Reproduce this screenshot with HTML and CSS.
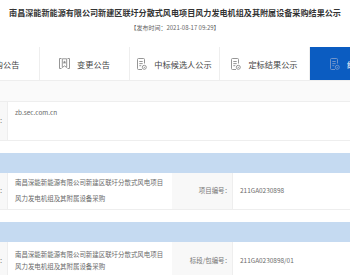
FILE: index.html
```html
<!DOCTYPE html>
<html lang="zh-CN">
<head>
<meta charset="utf-8">
<title>结果公示</title>
<link rel="stylesheet" href="styles.css">
</head>
<body>
<div class="page">
  <h1 class="title">南昌深能新能源有限公司新建区联圩分散式风电项目风力发电机组及其附属设备采购结果公示</h1>
  <div class="meta">【发布时间：2021-08-17 09:29】</div>

  <div class="tabs">
    <div class="tab">
      <svg class="icon" viewBox="0 0 10 12" width="10" height="12"><path d="M7.5 5.5V1.5a1 1 0 0 0-1-1h-5a1 1 0 0 0-1 1v9a1 1 0 0 0 1 1h3.5" fill="none" stroke="currentColor" stroke-width="0.9"/><path d="M2.3 3.5h3.4M2.3 5.6h3.4M2.3 7.7h2" stroke="currentColor" stroke-width="0.9"/><circle cx="7.3" cy="9.3" r="2" fill="none" stroke="currentColor" stroke-width="0.9"/><circle cx="7.3" cy="9.3" r="0.6" fill="currentColor"/></svg>
      <span>采购公告</span>
    </div>
    <div class="tab">
      <svg class="icon" viewBox="0 0 11 11" width="11" height="11"><path d="M2.5 0.5H0.5v10h2M8.5 0.5h2v10h-2" fill="none" stroke="currentColor" stroke-width="0.9"/><path d="M3.3 0.8v8.7l2.2-1.6 2.2 1.6V0.8z" fill="none" stroke="currentColor" stroke-width="0.9"/><path d="M5.5 2.6l0.55 1.1 1.2 0.15-0.9 0.8 0.25 1.2-1.1-0.6-1.1 0.6 0.25-1.2-0.9-0.8 1.2-0.15z" fill="currentColor"/></svg>
      <span>变更公告</span>
    </div>
    <div class="tab">
      <svg class="icon" viewBox="0 0 10 12" width="10" height="12"><path d="M7.5 5.5V1.5a1 1 0 0 0-1-1h-5a1 1 0 0 0-1 1v9a1 1 0 0 0 1 1h3.5" fill="none" stroke="currentColor" stroke-width="0.9"/><path d="M2.3 3.5h3.4M2.3 5.6h3.4M2.3 7.7h2" stroke="currentColor" stroke-width="0.9"/><circle cx="7.3" cy="9.3" r="2" fill="none" stroke="currentColor" stroke-width="0.9"/><circle cx="7.3" cy="9.3" r="0.6" fill="currentColor"/></svg>
      <span>中标候选人公示</span>
    </div>
    <div class="tab">
      <svg class="icon" viewBox="0 0 10 12" width="10" height="12"><path d="M7.5 5.5V1.5a1 1 0 0 0-1-1h-5a1 1 0 0 0-1 1v9a1 1 0 0 0 1 1h3.5" fill="none" stroke="currentColor" stroke-width="0.9"/><path d="M2.3 3.5h3.4M2.3 5.6h3.4M2.3 7.7h2" stroke="currentColor" stroke-width="0.9"/><circle cx="7.3" cy="9.3" r="2" fill="none" stroke="currentColor" stroke-width="0.9"/><circle cx="7.3" cy="9.3" r="0.6" fill="currentColor"/></svg>
      <span>定标结果公示</span>
    </div>
    <div class="tab tab-active">
      <svg class="icon" viewBox="0 0 10 12" width="10" height="12"><path d="M7.5 5.5V1.5a1 1 0 0 0-1-1h-5a1 1 0 0 0-1 1v9a1 1 0 0 0 1 1h3.5" fill="none" stroke="currentColor" stroke-width="0.9"/><path d="M2.3 3.5h3.4M2.3 5.6h3.4M2.3 7.7h2" stroke="currentColor" stroke-width="0.9"/><circle cx="7.3" cy="9.3" r="2" fill="none" stroke="currentColor" stroke-width="0.9"/><circle cx="7.3" cy="9.3" r="0.6" fill="currentColor"/></svg>
      <span>结果公示</span>
    </div>
  </div>

  <section class="section section-first">
    <div class="section-head section-head-plain"></div>
    <div class="row">
      <div class="cell label label-tall">招标代理网址：</div>
      <div class="cell value value-top span-3">zb.sec.com.cn</div>
    </div>
  </section>

  <section class="section">
    <div class="section-head"></div>
    <div class="row">
      <div class="cell label">项目名称：</div>
      <div class="cell value">南昌深能新能源有限公司新建区联圩分散式风电项目风力发电机组及其附属设备采购</div>
      <div class="cell label">项目编号：</div>
      <div class="cell value">211GA0230898</div>
    </div>
  </section>

  <section class="section">
    <div class="section-head"></div>
    <div class="row row-tight">
      <div class="cell label">标段名称：</div>
      <div class="cell value">南昌深能新能源有限公司新建区联圩分散式风电项目风力发电机组及其附属设备采购</div>
      <div class="cell label">标段/包编号：</div>
      <div class="cell value">211GA0230898/01</div>
    </div>
  </section>
</div>
</body>
</html>
```

FILE: styles.css
```css
html, body {
  margin: 0;
  padding: 0;
  background: #ffffff;
}

.page {
  width: 350px;
  overflow: hidden;
  font-family: "Noto Sans CJK SC", "Noto Sans", sans-serif;
}

.title {
  margin: 8px 0 0;
  font-size: 8.1px;
  line-height: 10px;
  font-weight: bold;
  color: #333333;
  text-align: center;
  white-space: nowrap;
}

.meta {
  margin-top: 6px;
  font-size: 6px;
  line-height: 8px;
  color: #666666;
  text-align: center;
}

.tabs {
  display: flex;
  margin: 15px 0 0 -50px;
  height: 33px;
  border-bottom: 1px solid #eeeeee;
}

.tab {
  flex: none;
  width: 90px;
  box-sizing: border-box;
  border-right: 1px solid #eeeeee;
  display: flex;
  align-items: center;
  justify-content: center;
  gap: 7px;
  font-size: 8.2px;
  color: #444444;
  white-space: nowrap;
}

.tab .icon {
  color: #8a8a8a;
  flex: none;
}

.tab-active {
  background: #0b5cc1;
  color: #ffffff;
  border-right: none;
  justify-content: flex-start;
  padding-left: 20px;
}

.tab-active .icon {
  color: #7b9bcc;
}

.section {
  margin-top: 12px;
}

.section-first {
  margin-top: 0;
}

.section-head {
  height: 20px;
  background: #c5daf1;
}

.section-head-plain {
  background: #fafafa;
  border-bottom: 1px solid #eeeeee;
}

.row {
  display: grid;
  grid-template-columns: 81px 164px 61px 1fr;
  margin-left: -73px;
  border-bottom: 1px solid #eeeeee;
  font-size: 6.45px;
  line-height: 16px;
}

.cell {
  box-sizing: border-box;
  padding: 2px 7px;
  color: #6a6a6a;
}

.label {
  background: #f8f8f8;
  border-right: 1px solid #eeeeee;
  text-align: right;
  padding-right: 1px;
  display: flex;
  align-items: center;
  justify-content: flex-end;
  color: #777777;
  white-space: nowrap;
}

.label-tall {
  min-height: 38px;
}

.value {
  display: flex;
  align-items: center;
}

.value-top {
  align-items: flex-start;
  padding-top: 3px;
}

.span-3 {
  grid-column: span 3;
}

.row-tight {
  line-height: 12px;
}

.row-tight .cell {
  padding-top: 7px;
  padding-bottom: 7px;
}
```
